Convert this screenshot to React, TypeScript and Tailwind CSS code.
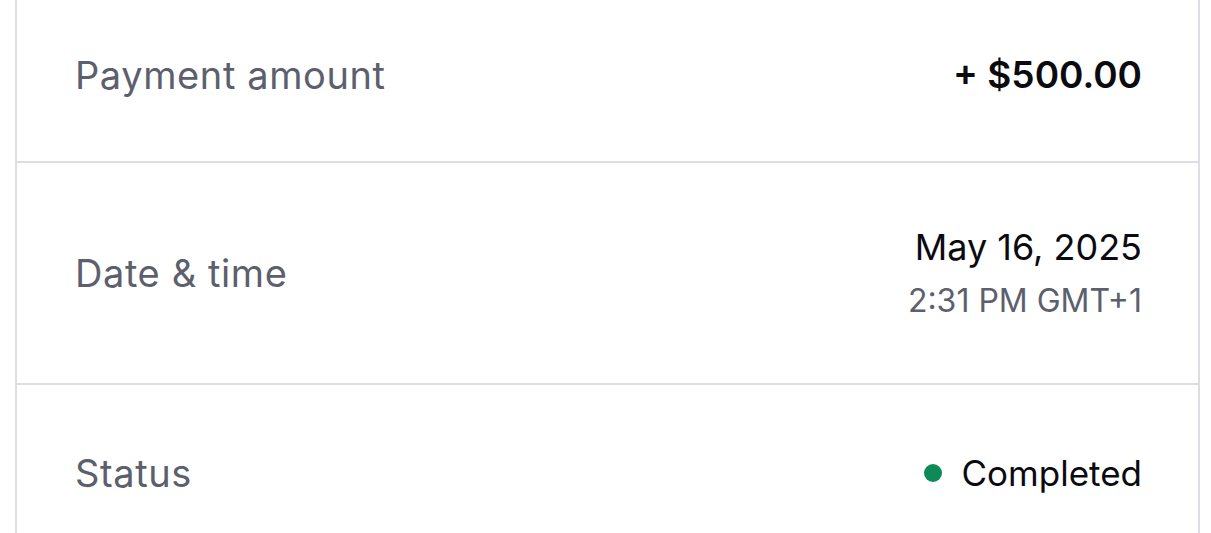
import React from "react";

type Row = {
  label: string;
  value: React.ReactNode;
  className: string;
};

function DetailRow({ label, value, className }: Row) {
  return (
    <div
      className={`flex flex-row items-center justify-between pl-[58px] pr-[56px] ${className}`}
    >
      <span className="text-[38px] leading-none tracking-[0.6px] text-[#5c5f6d]">
        {label}
      </span>
      <div className="flex flex-col items-end">{value}</div>
    </div>
  );
}

export default function App() {
  return (
    <div
      className="h-[533px] w-[1211px] overflow-hidden bg-white"
      style={{ fontFamily: "Inter, 'Noto Sans', sans-serif" }}
    >
      <div className="ml-[15px] w-[1185px] border-x-2 border-[#dddde3]">
        <DetailRow
          label="Payment amount"
          className="h-[163px] pb-[12px] border-b-2 border-[#dddde3]"
          value={
            <span className="text-[37px] font-semibold leading-none text-[#0b0b0f]">
              + $500.00
            </span>
          }
        />
        <DetailRow
          label="Date & time"
          className="h-[222px] border-b-2 border-[#dddde3]"
          value={
            <>
              <span className="text-[36px] leading-none text-[#0b0b0f]">
                May 16, 2025
              </span>
              <span className="mt-[20px] text-[32px] leading-none text-[#5c5f6d]">
                2:31 PM GMT+1
              </span>
            </>
          }
        />
        <DetailRow
          label="Status"
          className="h-[176px]"
          value={
            <div className="flex flex-row items-center gap-[20px]">
              <span className="size-[18px] rounded-full bg-[#0e8a58]" />
              <span className="text-[35px] leading-none text-[#0b0b0f]">
                Completed
              </span>
            </div>
          }
        />
      </div>
    </div>
  );
}
